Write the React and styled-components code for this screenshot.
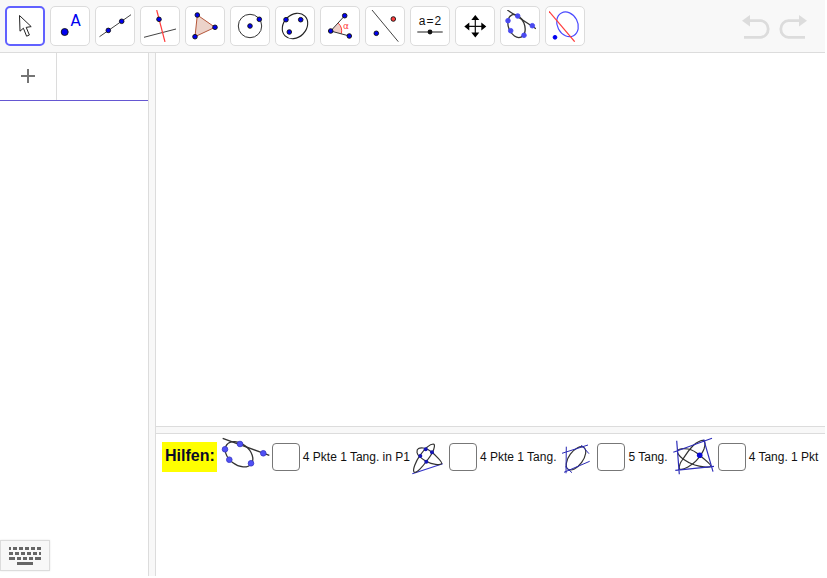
import { useState } from 'react';
import styled, { createGlobalStyle } from 'styled-components';

const GlobalStyle = createGlobalStyle`
  * {
    box-sizing: border-box;
  }

  body {
    margin: 0;
    background: #fff;
    font-family: "Liberation Sans", Arial, sans-serif;
  }
`;

const App = styled.div`
  display: flex;
  flex-direction: column;
  height: 100vh;
  padding: 0 2px 2px 0;
`;

const Toolbar = styled.header`
  display: flex;
  align-items: center;
  justify-content: space-between;
  height: 53px;
  padding: 0 18px 0 5px;
  background: #f8f8f8;
  border-bottom: 1px solid #dcdcdc;
`;

const Tools = styled.div`
  display: flex;
  gap: 5px;
`;

const ToolButton = styled.button`
  display: flex;
  align-items: center;
  justify-content: center;
  width: 40px;
  height: 40px;
  padding: 0;
  background: #fff;
  border: ${({ $active }) => ($active ? '2px solid #6161ff' : '1px solid #dcdcdc')};
  border-radius: 5px;

  svg {
    flex: none;
  }
`;

const History = styled.div`
  display: flex;
  gap: 9px;
  padding-top: 2px;
`;

const PlainButton = styled.button`
  display: flex;
  align-items: center;
  justify-content: center;
  padding: 0;
  background: none;
  border: 0;
`;

const Workspace = styled.div`
  display: flex;
  flex: 1;
  min-height: 0;
`;

const Algebra = styled.aside`
  display: flex;
  flex-direction: column;
  justify-content: space-between;
  width: 148px;
  padding-bottom: 5px;
`;

const InputRow = styled.div`
  display: flex;
  height: 48px;
  border-bottom: 1px solid #6557d2;
`;

const AddButton = styled(PlainButton)`
  width: 57px;
  padding-bottom: 2px;
  border-right: 1px solid #dcdcdc;
`;

const AlgebraInput = styled.input`
  flex: 1;
  min-width: 0;
  padding: 0 8px;
  border: 0;
  outline: 0;
  font-size: 16px;
`;

const KeyboardButton = styled(PlainButton)`
  width: 50px;
  height: 31px;
  background: #f8f8f8;
  border: 1px solid #dcdcdc;
  box-shadow: 0 0 2px #e6e6e6;
`;

const VerticalSplit = styled.div`
  width: 8px;
  background: #f8f8f8;
  border: solid #dcdcdc;
  border-width: 0 1px;
`;

const HorizontalSplit = styled.div`
  height: 8px;
  background: #f8f8f8;
  border: solid #dcdcdc;
  border-width: 1px 0;
`;

const Views = styled.main`
  display: flex;
  flex: 1;
  flex-direction: column;
  min-width: 0;
`;

const Graphics = styled.section`
  flex: 373;
`;

const Graphics2 = styled.section`
  flex: 142;
  overflow: hidden;
`;

const HelpRow = styled.div`
  display: flex;
  align-items: center;
  gap: 5px;
  height: 46px;
  padding-left: 6px;
`;

const Heading = styled.h2`
  margin: 0;
  padding: 0 2px 2px 3px;
  background: #ff0;
  color: #0a0a28;
  font-size: 16px;
  line-height: 28px;
`;

const Option = styled.label`
  display: flex;
  flex: none;
  align-items: center;
  gap: 3px;
  color: #111;
  font-size: 12px;
  line-height: 16px;
  white-space: nowrap;

  svg {
    overflow: visible;
  }
`;

const Checkbox = styled.input`
  appearance: none;
  width: 28px;
  height: 28px;
  margin: 0;
  background: #fff;
  border: 1px solid #777;
  border-radius: 4px;

  &:checked {
    background: #6161ff;
  }
`;

const Point = ({ x, y, r = 2.3, fill = '#0000f0', stroke = '#111' }) => (
  <circle cx={x} cy={y} r={r} fill={fill} stroke={stroke} strokeWidth="0.9" />
);

const tools = [
  {
    name: 'Bewege',
    icon: (
      <path
        d="M10.5 5.5 11 21.2l3.4-3L17.6 26.2l2.8-1.2-3.2-7.6 5-.8z"
        fill="#fff"
        stroke="#222"
      />
    )
  },
  {
    name: 'Punkt',
    icon: (
      <>
        <Point x={10.7} y={22} r={3.5} />
        <text x="16.4" y="16" fontSize="15" fontFamily="DejaVu Sans" fill="#0000f0">A</text>
      </>
    )
  },
  {
    name: 'Gerade',
    icon: (
      <>
        <path d="M.5 26.7 32 4.7" stroke="#444" />
        <Point x={9.3} y={20.4} />
        <Point x={22.7} y={11.3} />
      </>
    )
  },
  {
    name: 'Senkrechte Gerade',
    icon: (
      <>
        <path d="M0 27.3 32 19" stroke="#444" />
        <path d="M12.7 0 21 32" stroke="#ff3d3d" strokeWidth="1.2" />
        <Point x={15} y={9.3} />
      </>
    )
  },
  {
    name: 'Vieleck',
    icon: (
      <>
        <path d="M8.3 5 26 17.3 6 26.7z" fill="#ecd3ca" stroke="#b5573a" />
        <Point x={8.3} y={5} />
        <Point x={26} y={17.3} />
        <Point x={6} y={26.7} />
      </>
    )
  },
  {
    name: 'Kreis',
    icon: (
      <>
        <circle cx="16" cy="16" r="11.7" stroke="#333" />
        <Point x={16} y={16} />
        <Point x={25.3} y={9.3} />
      </>
    )
  },
  {
    name: 'Ellipse',
    icon: (
      <>
        <ellipse cx="16" cy="16" rx="14" ry="11.3" transform="rotate(-45 16 16)" stroke="#222" strokeWidth="1.1" />
        <Point x={7} y={9.7} />
        <Point x={21.7} y={9.7} />
        <Point x={10.3} y={22} />
      </>
    )
  },
  {
    name: 'Winkel',
    icon: (
      <>
        <path d="M6.7 21 14.3 13.2A11 11 0 0 1 17.3 23.8z" fill="#efcfc8" />
        <path d="M14.3 13.2A11 11 0 0 1 17.3 23.8" stroke="#ff3d3d" />
        <path d="M20.7 5.7 6.7 21l18.6 5" stroke="#333" />
        <Point x={6.7} y={21} />
        <Point x={20.7} y={5.7} />
        <Point x={25.3} y={26} />
        <text x="19" y="19" fontSize="9" fontFamily="DejaVu Sans" fill="#ff3d3d">α</text>
      </>
    )
  },
  {
    name: 'Spiegle an Gerade',
    icon: (
      <>
        <path d="M3 0 29.3 31.7" stroke="#444" />
        <Point x={24.3} y={9} fill="#ff3d3d" />
        <Point x={7.3} y={23.3} />
      </>
    )
  },
  {
    name: 'Schieberegler',
    icon: (
      <>
        <text x="4.8" y="14.7" fontSize="12" fontFamily="Liberation Sans" fill="#111">
          a<tspan dx="1">=</tspan><tspan dx="1">2</tspan>
        </text>
        <path d="M3.3 22H28.7" stroke="#444" strokeWidth="1.2" />
        <circle cx="16" cy="22" r="2.4" fill="#111" />
      </>
    )
  },
  {
    name: 'Verschiebe Zeichenblatt',
    icon: (
      <>
        <path d="M16.3 7v19M7 16.4h19" stroke="#111" strokeWidth="1.2" />
        <path d="m16.3 5 4 5h-8zM16.3 27.5l4-5h-8zM5.3 16.4l5-4v8zM27.3 16.4l-5-4v8z" fill="#000" />
      </>
    )
  },
  {
    name: '4 Punkte, 1 Tangente',
    icon: (
      <>
        <ellipse cx="12.5" cy="16" rx="8" ry="12" transform="rotate(-22 12.5 16)" stroke="#333" strokeWidth="1.3" />
        <path d="M3.3 0 32 18.7" stroke="#333" strokeWidth="1.2" />
        <Point x={13.7} y={6} stroke="#4a4af0" fill="#4a4af0" />
        <Point x={4} y={10.7} stroke="#4a4af0" fill="#4a4af0" />
        <Point x={6.7} y={20.7} stroke="#4a4af0" fill="#4a4af0" />
        <Point x={20} y={25.3} stroke="#4a4af0" fill="#4a4af0" />
        <Point x={28.3} y={15.7} stroke="#4a4af0" fill="#4a4af0" />
      </>
    )
  },
  {
    name: 'Polare',
    icon: (
      <>
        <ellipse cx="18.5" cy="14.3" rx="10.2" ry="12.9" transform="rotate(-28 18.5 14.3)" stroke="#4a4aff" strokeWidth="1.2" />
        <path d="M0 1.3 25.7 31.7" stroke="#ff3d3d" strokeWidth="1.2" />
        <Point x={6} y={27.3} r={1.9} stroke="#0000f0" />
      </>
    )
  }
];

const options = [
  {
    id: 'tangente-in-p1',
    text: '4 Pkte 1 Tang. in P1',
    width: 47,
    viewBox: '0 4 47 38',
    icon: (
      <>
        <ellipse cx="17" cy="20.3" rx="15.5" ry="10.5" transform="rotate(38 17 20.3)" stroke="#333" strokeWidth="1.3" />
        <path d="M.7 4.3 47.3 21.3" stroke="#333" strokeWidth="1.3" />
        {[[18, 10], [3, 15.3], [7.3, 25.7], [29, 29.3], [41.3, 19.3]].map(([x, y]) => (
          <Point key={x} x={x} y={y} r={2.8} fill="#5050f5" stroke="#3c3cc8" />
        ))}
      </>
    )
  },
  {
    id: 'punkte-tangente',
    text: '4 Pkte 1 Tang.',
    width: 31,
    viewBox: '4 -5 31 38',
    icon: (
      <>
        <path d="M1.3 30.7 31.7 20.7" stroke="#3333c8" strokeWidth="1.2" />
        <path
          d="M3 29C1.5 27 4.5 18.5 9 12.3 12.5 7.5 18.5 1.2 22.3 1c2 0 1.2 4.5-1 8.7-1.6 3-3.3 5.3-5.6 8.3C12 23 5.5 31 3 29z"
          stroke="#333"
          strokeWidth="1.2"
        />
        <path
          d="M6 9.5C5.5 5.5 8.5 4.5 12.3 5c3.5.5 6 2 8.4 4 3.3 2.700 11 10.500 10 11.700-1.500 1.800-10 .5-14.700-2C12 16.500 6.500 13 6 9.500z"
          stroke="#333"
          strokeWidth="1.2"
        />
        {[[14.7, 6.3], [21, 9.3], [9.3, 13], [15.3, 18.7]].map(([x, y]) => (
          <circle key={x} cx={x} cy={y} r="2" fill="#1414b4" />
        ))}
      </>
    )
  },
  {
    id: 'tangenten',
    text: '5 Tang.',
    width: 33,
    viewBox: '0 -5 33 38',
    icon: (
      <>
        <ellipse cx="15" cy="15.3" rx="13.5" ry="7" transform="rotate(-54 15 15.3)" stroke="#333" strokeWidth="1.2" />
        <path
          d="M5.3 3.7 5 30.3M1 10.3 27 2M20.3 2 28 10.7M3 29.3 28.7 18.3M4.3 23.7 11 29.7"
          stroke="#2828b4"
        />
      </>
    )
  },
  {
    id: 'tangenten-punkt',
    text: '4 Tang. 1 Pkt',
    width: 42,
    viewBox: '0 1 42 38',
    icon: (
      <>
        <path
          d="M6.5 32C5.500 28 8 24.500 10 22 13 17.500 16 12.500 20 8.700 23.500 5.500 29 2.500 31 3.700c1.500 1.300 1 5 0 8.300-1.500 4-4.500 8-7.700 11.700C20 27.500 10 34 6.500 32z"
          stroke="#333"
          strokeWidth="1.2"
        />
        <path
          d="M4.500 14C6 11 10.500 11.300 15 12c5 1 8.500 3.500 11.700 6.300 4 3.200 12 9.500 11 11-1.700 1.700-11 .2-16-1.300C17 26.500 13.500 24.500 10 22 7.500 20 4 16.500 4.500 14z"
          stroke="#333"
          strokeWidth="1.2"
        />
        <path
          d="M.3 15.3 39 1.3M3.7 3.7 6.3 37.3M2.3 33.3 41 29.3M30.7 2.3 40 34.7"
          stroke="#2d2db9"
          strokeWidth="1.2"
        />
        <circle cx="26.7" cy="18.3" r="2.8" fill="#0a0ad2" />
      </>
    )
  }
];

const UndoIcon = ({ flip }) => (
  <svg width="28" height="24" viewBox="0 0 28 24" fill="none">
    <g transform={flip ? 'matrix(-1 0 0 1 28 0)' : undefined}>
      <path d="M7 5.7H18.5a7.7 8.3 0 0 1 0 16.6H2" stroke="#dcdcdc" strokeWidth="2.8" />
      <path d="M0 5.7 8 0v11.4z" fill="#dcdcdc" />
    </g>
  </svg>
);

const KeyboardIcon = () => (
  <svg width="32" height="18" viewBox="0 0 32 18" fill="#666" shapeRendering="crispEdges">
    <path d="M0 0h2v3H0zM4 0h4v3H4zM10 0h4v3h-4zM16 0h4v3h-4zM22 0h4v3h-4zM28 0h4v3h-4z" />
    <path d="M0 5h4v3H0zM6 5h4v3H6zM12 5h4v3h-4zM18 5h4v3h-4zM24 5h4v3h-4zM30 5h2v3h-2z" />
    <path d="M0 10h6v3H0zM8 10h4v3H8zM14 10h4v3h-4zM20 10h4v3h-4zM26 10h6v3h-6z" />
    <path d="M8 15h16v3H8z" />
  </svg>
);

export default function GeometryApp() {
  const [active, setActive] = useState('Bewege');

  return (
    <App>
      <GlobalStyle />
      <Toolbar>
        <Tools>
          {tools.map(({ name, icon }) => (
            <ToolButton
              key={name}
              type="button"
              aria-label={name}
              aria-pressed={active === name}
              $active={active === name}
              onClick={() => setActive(name)}
            >
              <svg width="32" height="32" viewBox="0 0 32 32" fill="none">
                {icon}
              </svg>
            </ToolButton>
          ))}
        </Tools>
        <History>
          <PlainButton type="button" aria-label="Rückgängig">
            <UndoIcon />
          </PlainButton>
          <PlainButton type="button" aria-label="Wiederherstellen">
            <UndoIcon flip />
          </PlainButton>
        </History>
      </Toolbar>
      <Workspace>
        <Algebra>
          <InputRow>
            <AddButton type="button" aria-label="Hinzufügen">
              <svg width="14" height="14" viewBox="0 0 14 14" stroke="#757575" strokeWidth="2">
                <path d="M7 0v14M0 7h14" />
              </svg>
            </AddButton>
            <AlgebraInput aria-label="Eingabe" />
          </InputRow>
          <KeyboardButton type="button" aria-label="Tastatur">
            <KeyboardIcon />
          </KeyboardButton>
        </Algebra>
        <VerticalSplit />
        <Views>
          <Graphics aria-label="Grafik" />
          <HorizontalSplit />
          <Graphics2 aria-label="Grafik 2">
            <HelpRow>
              <Heading>Hilfen:</Heading>
              {options.map(({ id, text, width, viewBox, icon }) => (
                <Option key={id} htmlFor={id}>
                  <svg width={width} height="38" viewBox={viewBox} fill="none">
                    {icon}
                  </svg>
                  <Checkbox id={id} type="checkbox" />
                  {text}
                </Option>
              ))}
            </HelpRow>
          </Graphics2>
        </Views>
      </Workspace>
    </App>
  );
}
